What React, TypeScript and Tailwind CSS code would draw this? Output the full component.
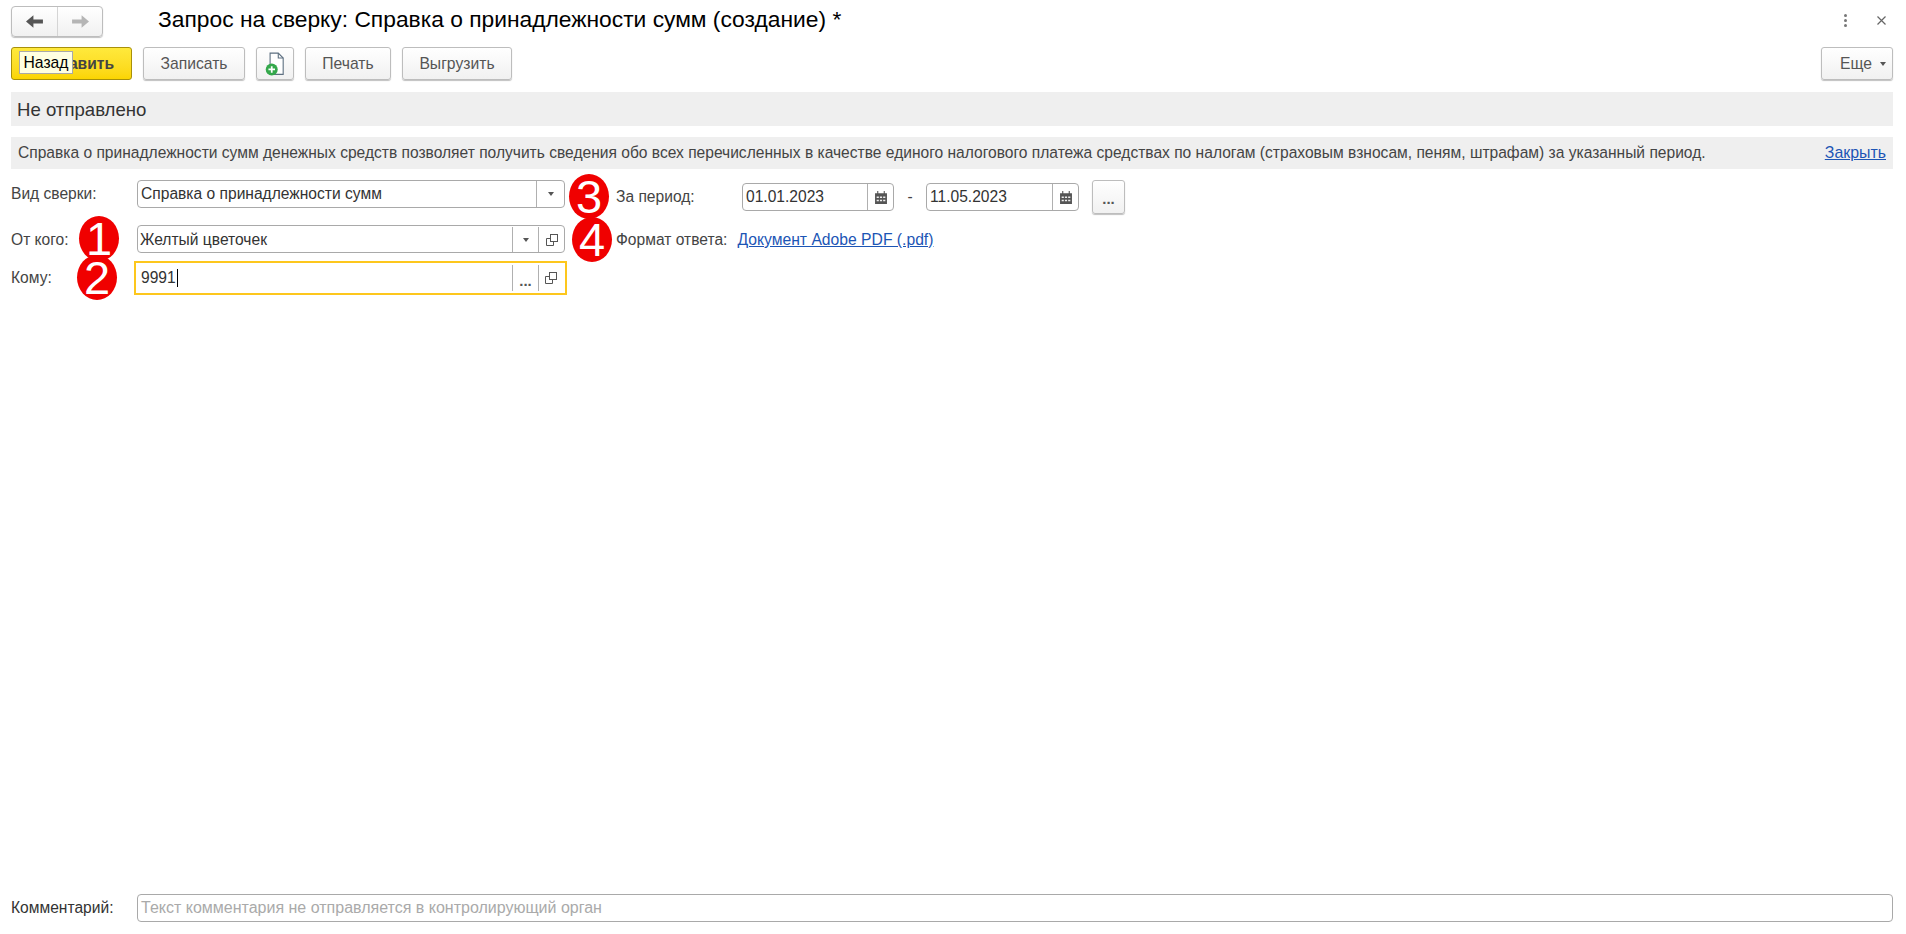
const font = "font-['Liberation_Sans',Arial,sans-serif]";

function ArrowIcon({ dir, color }: { dir: "left" | "right"; color: string }) {
  return (
    <svg width="18" height="13" viewBox="0 0 17 12" className={dir === "right" ? "rotate-180" : ""}>
      <path d="M0 6 L7 0 V4 H16 V8 H7 V12 Z" fill={color} />
    </svg>
  );
}

function ToolButton({ children, className = "" }: { children: React.ReactNode; className?: string }) {
  return (
    <button
      className={`flex h-[33px] items-center justify-center rounded-[3px] border border-[#bdbdbd] bg-gradient-to-b from-white to-[#f1f1f1] text-[15.7px] text-[#555] shadow-[0_1px_1px_rgba(0,0,0,0.25)] ${className}`}
    >
      {children}
    </button>
  );
}

function Caret() {
  return <span className="h-0 w-0 border-x-[3.5px] border-t-[4px] border-x-transparent border-t-[#555]" />;
}

function OpenIcon() {
  return (
    <svg width="12" height="12" viewBox="0 0 12 12" fill="none" stroke="#555" strokeWidth="1">
      <rect x="4.5" y="0.5" width="7" height="7" />
      <path d="M4.5 4.5 H0.5 V11.5 H7.5 V7.5" />
    </svg>
  );
}

function CalendarIcon() {
  return (
    <svg width="12" height="13" viewBox="0 0 11 12">
      <path d="M0 2 H2 V0 H3 V2 H8 V0 H9 V2 H11 V12 H0 Z" fill="#555" />
      <path d="M1.5 5h2v1.5h-2zM4.5 5h2v1.5h-2zM7.5 5h2v1.5h-2zM1.5 8h2v1.5h-2zM4.5 8h2v1.5h-2zM7.5 8h2v1.5h-2z" fill="#eee" />
    </svg>
  );
}

function Dots() {
  return <span className="text-[15px] font-bold leading-none text-[#555]">...</span>;
}

function Segment({ children, w }: { children: React.ReactNode; w: string }) {
  return <span className={`flex h-full items-center justify-center border-l border-[#b0b0b0] ${w}`}>{children}</span>;
}

function Field({ text, children, className = "", pad = "pl-[3px]" }: { text: string; children?: React.ReactNode; className?: string; pad?: string }) {
  return (
    <div className={`flex h-[28px] items-center rounded-[4px] border border-[#a9a9a9] bg-white ${className}`}>
      <span className={`flex-1 text-[15.6px] text-[#333] ${pad}`}>{text}</span>
      {children}
    </div>
  );
}

function Badge({ n, className }: { n: number; className: string }) {
  return (
    <span className={`absolute flex h-[45px] w-[40px] items-center justify-center rounded-[50%] bg-[#f00000] text-[47px] leading-none text-white ${className}`}>
      {n}
    </span>
  );
}

export default function App() {
  return (
    <div className={`${font} relative h-[934px] w-[1906px] overflow-hidden bg-white pl-[11px] pr-[13px] text-[#444]`}>
      {/* Title row */}
      <div className="flex h-[47px] items-start pt-[6px]">
        <div className="flex h-[31px] w-[92px] rounded-[4px] border border-[#bdbdbd] bg-gradient-to-b from-white to-[#f1f1f1] shadow-[0_1px_1px_rgba(0,0,0,0.25)]">
          <span className="flex w-[46px] items-center justify-center border-r border-[#d5d5d5]"><ArrowIcon dir="left" color="#555" /></span>
          <span className="flex flex-1 items-center justify-center"><ArrowIcon dir="right" color="#b5b5b5" /></span>
        </div>
        <h1 className="ml-[55px] -mt-[1px] text-[22.8px] leading-[28px] text-black">Запрос на сверку: Справка о принадлежности сумм (создание) *</h1>
        <div className="ml-auto flex items-center gap-[30px] pt-[8px] pr-[7px]">
          <span className="flex flex-col gap-[2px]">
            <i className="size-[3px] rounded-full bg-[#777]" />
            <i className="size-[3px] rounded-full bg-[#777]" />
            <i className="size-[3px] rounded-full bg-[#777]" />
          </span>
          <svg width="9" height="9" viewBox="0 0 9 9" stroke="#666" strokeWidth="1.2"><path d="M0.5 0.5 L8.5 8.5 M8.5 0.5 L0.5 8.5" /></svg>
        </div>
      </div>

      {/* Toolbar */}
      <div className="flex h-[33px] gap-[11px]">
        <button className="relative flex h-[33px] w-[121px] items-center justify-end rounded-[3px] border border-[#a8900a] bg-gradient-to-b from-[#ffe93b] to-[#fbd500] pr-[17px] text-[15.6px] font-bold text-[#444]">
          авить
          <span className="absolute left-[7px] top-[3px] flex h-[23px] w-[54px] items-center justify-center border border-[#a9a9a9] bg-[#ffffe1] text-[15.7px] font-normal text-black">Назад</span>
        </button>
        <ToolButton className="w-[102px]">Записать</ToolButton>
        <ToolButton className="w-[38px]">
          <svg width="20" height="24" viewBox="0 0 18 22" fill="none">
            <path d="M4.5 1 H12 L16.5 5.5 V20.5 H4.5 Z" fill="#fff" stroke="#5d6f80" />
            <path d="M12 1 V5.5 H16.5" stroke="#5d6f80" />
            <circle cx="6" cy="16" r="5.5" fill="#34a84b" />
            <path d="M6 13 V19 M3 16 H9" stroke="#fff" strokeWidth="1.6" />
          </svg>
        </ToolButton>
        <ToolButton className="w-[86px]">Печать</ToolButton>
        <ToolButton className="w-[110px]">Выгрузить</ToolButton>
        <ToolButton className="ml-auto w-[72px] gap-[8px] pl-[12px]">Еще <Caret /></ToolButton>
      </div>

      {/* Status */}
      <div className="mt-[12px] flex h-[34px] items-center bg-[#efefef] pl-[6px] pt-[1px] text-[18.6px] text-[#333]">Не отправлено</div>

      {/* Info bar */}
      <div className="mt-[11px] flex h-[32px] items-center justify-between bg-[#efefef] pl-[7px] pr-[7px] text-[15.58px] text-[#444]">
        <span>Справка о принадлежности сумм денежных средств позволяет получить сведения обо всех перечисленных в качестве единого налогового платежа средствах по налогам (страховым взносам, пеням, штрафам) за указанный период.</span>
        <a className="text-[15.9px] text-[#1c55b5] underline">Закрыть</a>
      </div>

      {/* Form */}
      <div className="relative mt-[11px] flex text-[15.6px]">
        <div className="w-[556px]">
          <div className="flex h-[28px] items-center">
            <span className="w-[126px]">Вид сверки:</span>
            <Field text="Справка о принадлежности сумм" className="w-[428px]">
              <Segment w="w-[28px]"><Caret /></Segment>
            </Field>
          </div>
          <div className="mt-[17px] flex h-[28px] items-center">
            <span className="w-[126px] pt-[1px]">От кого:</span>
            <Field text="Желтый цветочек" className="w-[428px] pt-[1px]" pad="pl-[2px]">
              <Segment w="w-[26px]"><Caret /></Segment>
              <Segment w="w-[26px]"><OpenIcon /></Segment>
            </Field>
          </div>
          <div className="mt-[8px] flex h-[34px] items-center">
            <span className="w-[123px]">Кому:</span>
            <div className="flex h-[34px] w-[433px] items-center border-2 border-[#fdc71d] bg-white">
              <span className="flex flex-1 items-center pl-[5px] text-[15.6px] text-[#333]">9991<i className="ml-px h-[18px] w-px bg-black" /></span>
              <span className="flex h-[26px] w-[26px] items-end justify-center border-l border-[#b0b0b0] pb-[3px]"><Dots /></span>
              <span className="flex h-[26px] w-[27px] items-center justify-center border-l border-[#b0b0b0] pr-[2px]"><OpenIcon /></span>
            </div>
          </div>
        </div>

        <div className="ml-[49px]">
          <div className="flex h-[34px] items-center">
            <span className="w-[126px]">За период:</span>
            <Field text="01.01.2023" className="w-[152px]">
              <Segment w="w-[26px]"><CalendarIcon /></Segment>
            </Field>
            <span className="w-[32px] text-center">-</span>
            <Field text="11.05.2023" className="w-[153px]">
              <Segment w="w-[26px]"><CalendarIcon /></Segment>
            </Field>
            <ToolButton className="ml-[13px] h-[34px] w-[33px] items-end pb-[7px]"><Dots /></ToolButton>
          </div>
          <div className="mt-[14px] flex items-center">
            <span>Формат ответа:</span>
            <a className="ml-[10px] text-[15.7px] text-[#1c55b5] underline">Документ Adobe PDF (.pdf)</a>
          </div>
        </div>

        <Badge n={1} className="left-[68px] top-[36px]" />
        <Badge n={2} className="left-[66px] top-[75px]" />
        <Badge n={3} className="left-[558px] top-[-6px]" />
        <Badge n={4} className="left-[561px] top-[37px]" />
      </div>

      {/* Comment */}
      <div className="absolute bottom-[12px] left-[11px] right-[13px] flex items-center text-[15.6px]">
        <span className="w-[126px] text-[#333]">Комментарий:</span>
        <div className="flex h-[28px] flex-1 items-center rounded-[4px] border border-[#a9a9a9] pl-[3px] text-[16px] text-[#aaa]">Текст комментария не отправляется в контролирующий орган</div>
      </div>
    </div>
  );
}
